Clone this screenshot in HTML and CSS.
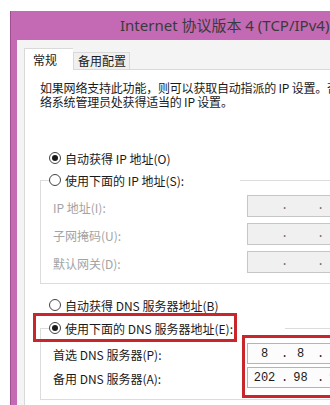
FILE: index.html
```html
<!DOCTYPE html>
<html lang="zh-CN">
<head>
  <meta charset="UTF-8">
  <title>Internet 协议版本 4 (TCP/IPv4) 属性</title>
  <link rel="stylesheet" href="styles.css">
</head>
<body>
  <div class="window">
    <div class="titlebar">Internet 协议版本 4 (TCP/IPv4) 属性</div>
    <div class="frame">
      <div class="tabs">
        <div class="tab active">常规</div>
        <div class="tab">备用配置</div>
      </div>
      <div class="panel">
        <p class="intro">如果网络支持此功能，则可以获取自动指派的 IP 设置。否<br>络系统管理员处获得适当的 IP 设置。</p>

        <div class="option first"><span class="radio checked"></span>自动获得 IP 地址(O)</div>
        <fieldset class="group">
          <legend class="ip-legend"><span class="radio"></span>使用下面的 IP 地址(S):</legend>
          <div class="row disabled">
            <label>IP 地址(I):</label>
            <div class="ipbox off"><span class="seg"></span><span class="dot">.</span><span class="seg"></span><span class="dot">.</span><span class="seg"></span></div>
          </div>
          <div class="row disabled">
            <label>子网掩码(U):</label>
            <div class="ipbox off"><span class="seg"></span><span class="dot">.</span><span class="seg"></span><span class="dot">.</span><span class="seg"></span></div>
          </div>
          <div class="row disabled">
            <label>默认网关(D):</label>
            <div class="ipbox off"><span class="seg"></span><span class="dot">.</span><span class="seg"></span><span class="dot">.</span><span class="seg"></span></div>
          </div>
        </fieldset>

        <div class="option dns-auto"><span class="radio"></span>自动获得 DNS 服务器地址(B)</div>
        <fieldset class="group dns">
          <legend class="dns-legend"><span class="radio checked"></span>使用下面的 DNS 服务器地址(E):</legend>
          <div class="row tight">
            <label>首选 DNS 服务器(P):</label>
            <div class="ipbox"><span class="seg">8</span><span class="dot">.</span><span class="seg">8</span><span class="dot">.</span><span class="seg">8</span></div>
          </div>
          <div class="row tight">
            <label>备用 DNS 服务器(A):</label>
            <div class="ipbox"><span class="seg">202</span><span class="dot">.</span><span class="seg">98</span><span class="dot">.</span><span class="seg">96</span></div>
          </div>
        </fieldset>
      </div>
    </div>
  </div>

  <!-- annotation boxes drawn over the dialog -->
  <div class="mark mark-radio"></div>
  <div class="mark mark-fields"></div>
</body>
</html>
```

FILE: styles.css
```css
html, body {
  margin: 0;
  overflow: hidden;
}
body {
  width: 330px;
  height: 405px;
  background: #fff;
  font-family: "Noto Sans CJK SC", "Noto Sans", sans-serif;
  font-size: 12px;
  color: #1a1a1a;
  position: relative;
}
.window {
  margin: 11px 0 0 10px;
  width: 320px;
  height: 394px;
  background: #c46ab4;
  border-left: 1px solid #a04f92;
  box-sizing: border-box;
  padding: 0 0 0 6px;
  display: flex;
  flex-direction: column;
  overflow: hidden;
}
.titlebar {
  height: 29px;
  line-height: 28px;
  padding-left: 103px;
  font-family: "Noto Sans", "Noto Sans CJK SC", sans-serif;
  font-size: 15px;
  color: #3a3a3a;
  white-space: nowrap;
}
.frame {
  flex: 1;
  background: #f4f4f4;
  padding: 8px 0 0 7px;
  display: flex;
  flex-direction: column;
  min-width: 0;
}
.tabs {
  display: flex;
  align-items: flex-end;
  height: 21px;
  position: relative;
  z-index: 1;
}
.tab {
  height: 16px;
  line-height: 15px;
  padding: 0 3px 0 4px;
  background: #f0f0f0;
  border: 1px solid #d9d9d9;
  border-bottom: none;
}
.tab.active {
  height: 21px;
  line-height: 22px;
  width: 40px;
  padding: 0 0 0 8px;
  background: #fff;
  margin-bottom: -1px;
  border-right: none;
}
.panel {
  flex: 1;
  background: #fff;
  border-left: 1px solid #d9d9d9;
  border-top: 1px solid #d9d9d9;
  padding: 11px 0 0 15px;
  overflow: hidden;
  min-width: 0;
}
.intro {
  margin: 0;
  line-height: 14px;
  letter-spacing: -0.2px;
  white-space: nowrap;
}
.option {
  display: flex;
  align-items: center;
  height: 20px;
  margin-left: 9px;
}
.option.first {
  margin-top: 39px;
}
.option.dns-auto {
  margin-top: 11px;
}
.radio {
  width: 10px;
  height: 10px;
  border: 1px solid #444;
  border-radius: 50%;
  background: #fff;
  margin-right: 4px;
  display: inline-flex;
  align-items: center;
  justify-content: center;
  flex: none;
}
.radio.checked::after {
  content: "";
  width: 6px;
  height: 6px;
  border-radius: 50%;
  background: #1a1a1a;
}
.group {
  margin: 2px 0 0 0;
  padding: 5px 0 10px 8px;
  width: 330px;
  border: 1px solid #dcdcdc;
  box-sizing: border-box;
}
.group.dns {
  margin-top: 3px;
  padding-bottom: 11px;
}
legend {
  padding: 0;
  height: 20px;
  display: flex;
  align-items: center;
  background: #fff;
}
.ip-legend {
  width: 191px;
}
.dns-legend {
  width: 236px;
}
.row {
  display: flex;
  align-items: center;
  height: 22px;
  margin-bottom: 6px;
  padding-left: 4px;
}
.row:last-child {
  margin-bottom: 0;
}
.row.tight {
  height: 21px;
  margin-bottom: 3px;
}
.row.tight:last-child {
  margin-bottom: 0;
}
.row label {
  width: 194px;
  flex: none;
  padding-top: 2px;
}
.row.disabled label {
  color: #a3a3a3;
}
.ipbox {
  width: 120px;
  flex: none;
  height: 100%;
  box-sizing: border-box;
  border: 1px solid #b4b4b4;
  background: #fcfcfc;
  display: flex;
  align-items: center;
  font-family: "Liberation Mono", "DejaVu Sans Mono", monospace;
  font-size: 12px;
}
.ipbox.off {
  background: #f0f0f0;
  border-color: #c6c6c6;
  color: #6a6a6a;
}
.seg {
  width: 33px;
  text-align: center;
  flex: none;
}
.dot {
  width: 3px;
  text-align: center;
  flex: none;
}
.mark {
  position: absolute;
  border: 3px solid #c8262b;
  box-sizing: border-box;
}
.mark-radio {
  left: 33px;
  top: 313px;
  width: 204px;
  height: 29px;
}
.mark-fields {
  left: 242px;
  top: 335px;
  width: 88px;
  height: 63px;
  border-right: none;
}
```
